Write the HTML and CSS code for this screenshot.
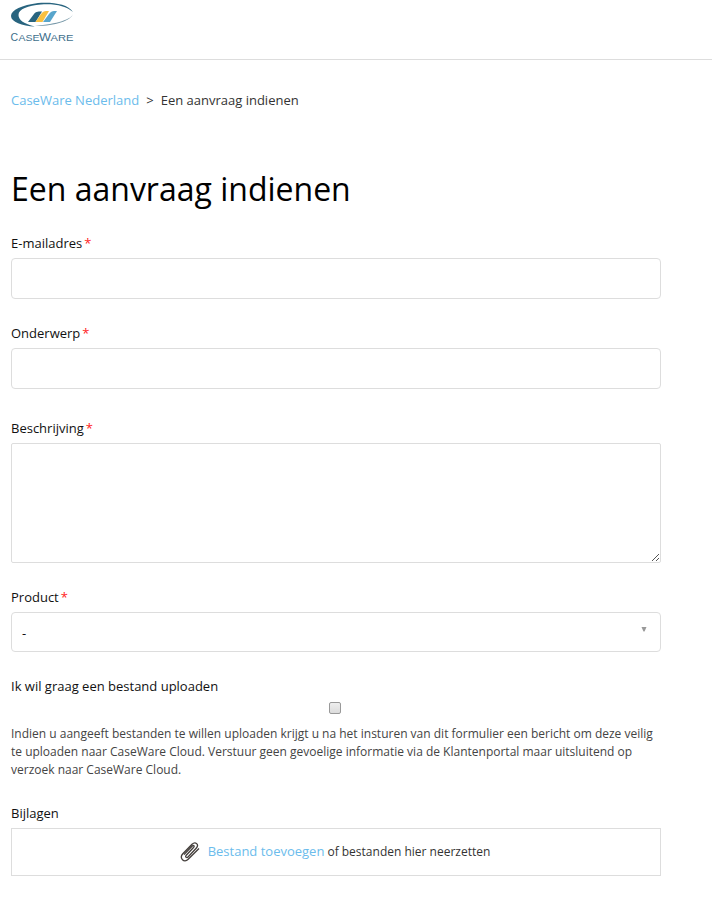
FILE: index.html
```html
<!DOCTYPE html>
<html lang="nl">
<head>
  <meta charset="UTF-8" />
  <meta name="viewport" content="width=device-width, initial-scale=1.0"/>
  <title>Een aanvraag indienen</title>
  <link rel="stylesheet" href="styles.css">
</head>
<body>
  <header class="header">
    <a class="logo" href="#">
      <svg width="66" height="44" viewBox="0 0 66 44">
        <path d="M18 22 L24 14 C25.5 12 27 11.5 32 11.5 L25.5 22 Z" fill="#28647f"/>
        <path d="M25.5 22 L31 14 C33 11.5 34 11 39 11 L32.5 22 Z" fill="#f8c040"/>
        <path d="M33 22 L39 14 C41 11.5 42 11 47 11 L40 22 Z" fill="#58a5cc"/>
        <path d="M63 12 C58 4 43 2 28 3 C12 5 1 10 1 16 C1 22 12 26 25 26.5 C14 24 8.5 20 8.5 15 C8.5 9 18 5.5 31 4.5 C45 3.5 56 6 63 12 Z" fill="#28647f"/>
        <path d="M63 14 C62 19 47 24 25 26 C43 26.5 61 21 63 14 Z" fill="#7899a9"/>
        <g class="logo-text">
          <text x="0.5" y="40.5" font-size="10.5" textLength="8">C</text>
          <text x="8.5" y="40.5" font-size="9" textLength="21" lengthAdjust="spacingAndGlyphs">ASE</text>
          <text x="29" y="40.5" font-size="10.5" textLength="12" lengthAdjust="spacingAndGlyphs">W</text>
          <text x="40.5" y="40.5" font-size="9" textLength="23" lengthAdjust="spacingAndGlyphs">ARE</text>
        </g>
      </svg>
    </a>
  </header>

  <main class="container">
    <nav class="breadcrumbs">
      <a href="#">CaseWare Nederland</a>
      <span class="separator">&gt;</span>
      <span>Een aanvraag indienen</span>
    </nav>

    <h1>Een aanvraag indienen</h1>

    <form class="form">
      <div class="form-field">
        <label for="email">E-mailadres<span class="required">*</span></label>
        <input type="text" id="email" />
      </div>

      <div class="form-field subject">
        <label for="subject">Onderwerp<span class="required">*</span></label>
        <input type="text" id="subject" />
      </div>

      <div class="form-field">
        <label for="description">Beschrijving<span class="required">*</span></label>
        <div class="textarea-wrap">
          <textarea id="description"></textarea>
          <svg class="grip" width="8" height="8" viewBox="0 0 8 8" shape-rendering="crispEdges">
            <path d="M0 7h1v1h-1zM1 6h1v1h-1zM2 5h1v1h-1zM3 4h1v1h-1zM4 3h1v1h-1zM5 2h1v1h-1zM6 1h1v1h-1zM4 7h1v1h-1zM5 6h1v1h-1zM6 5h1v1h-1z" fill="#555"/>
          </svg>
        </div>
      </div>

      <div class="form-field">
        <label>Product<span class="required">*</span></label>
        <a class="select" href="#">
          <span>-</span>
          <svg width="6" height="5" viewBox="0 0 6 5"><path d="M0.5 0h5l-2 4.5h-1z" fill="#999"/></svg>
        </a>
      </div>

      <div class="form-field upload">
        <label for="upload">Ik wil graag een bestand uploaden</label>
        <input type="checkbox" id="upload" />
        <p class="hint">Indien u aangeeft bestanden te willen uploaden krijgt u na het insturen van dit formulier een bericht om deze veilig te uploaden naar CaseWare Cloud. Verstuur geen gevoelige informatie via de Klantenportal maar uitsluitend op verzoek naar CaseWare Cloud.</p>
      </div>

      <div class="form-field">
        <label>Bijlagen</label>
        <div class="dropzone">
          <svg class="clip" width="20" height="20" viewBox="0 0 20 20">
            <path d="M13.5 5.5 L6 13.5 C5 15 6.8 16.3 8 15 L16.2 6.2 C19.5 2.5 15.5-1 12 2.2 L2.8 11.8 C-1 16 4 21.5 8.2 17.3 L19 6.5 M13.5 5.5 C15 3.8 13.5 2.8 12.3 4 L4 12.6" fill="none" stroke="#443f3c" stroke-width="1.3"/>
          </svg>
          <a href="#">Bestand toevoegen</a>
          <span>of bestanden hier neerzetten</span>
        </div>
      </div>
    </form>
  </main>
</body>
</html>
```

FILE: styles.css
```css
* {
  box-sizing: border-box;
}
body {
  font-family: "Open Sans", sans-serif;
  font-size: 13px;
  line-height: 18px;
  margin: 0;
  background: #fff;
  color: #333;
}
a {
  color: #6bbcec;
  text-decoration: none;
}
.header {
  height: 60px;
  padding-left: 10px;
  border-bottom: 1px solid #ddd;
}
.logo svg {
  display: block;
}
.logo-text {
  font-family: "Liberation Sans", Arial, sans-serif;
  fill: #406f8c;
}
.container {
  width: 650px;
  margin-left: 11px;
  padding-top: 31px;
}
.breadcrumbs {
  display: flex;
}
.separator {
  margin: 0 7px;
}
h1 {
  margin: 62px 0 28px;
  font-size: 32px;
  font-weight: 400;
  line-height: 35px;
  color: #000;
}
.form-field {
  margin-bottom: 25px;
}
.form-field.subject {
  margin-bottom: 30px;
}
label {
  display: block;
  margin-bottom: 6px;
  color: #111;
}
.required {
  margin-left: 2px;
  color: #f22;
}
input[type="text"],
textarea,
.select {
  display: block;
  width: 100%;
  height: 41px;
  padding: 0 10px;
  border: 1px solid #ddd;
  border-radius: 4px;
  background: #fff;
  font: inherit;
  outline: none;
}
.textarea-wrap {
  position: relative;
}
textarea {
  height: 120px;
  border-radius: 2px;
  resize: none;
}
.grip {
  position: absolute;
  right: 1px;
  bottom: 2px;
}
.select {
  display: flex;
  justify-content: space-between;
  align-items: center;
  height: 40px;
  padding-right: 13px;
  color: #111;
}
.select span {
  padding-top: 2px;
}
.select svg {
  margin-bottom: 5px;
}
input[type="checkbox"] {
  appearance: none;
  display: block;
  width: 12px;
  height: 12px;
  margin: 7px 0 11px 318px;
  border: 1px solid #999;
  border-radius: 2px;
  background: linear-gradient(#eee, #dcdcdc);
}
.hint {
  margin: 0;
  font-size: 12px;
  color: #444;
}
.dropzone {
  display: flex;
  justify-content: center;
  align-items: center;
  height: 48px;
  padding-right: 2px;
  border: 1px solid #ddd;
}
.dropzone a {
  margin-bottom: 2px;
}
.dropzone span {
  margin-left: 3px;
  font-size: 12px;
}
.clip {
  margin-right: 8px;
}
```
